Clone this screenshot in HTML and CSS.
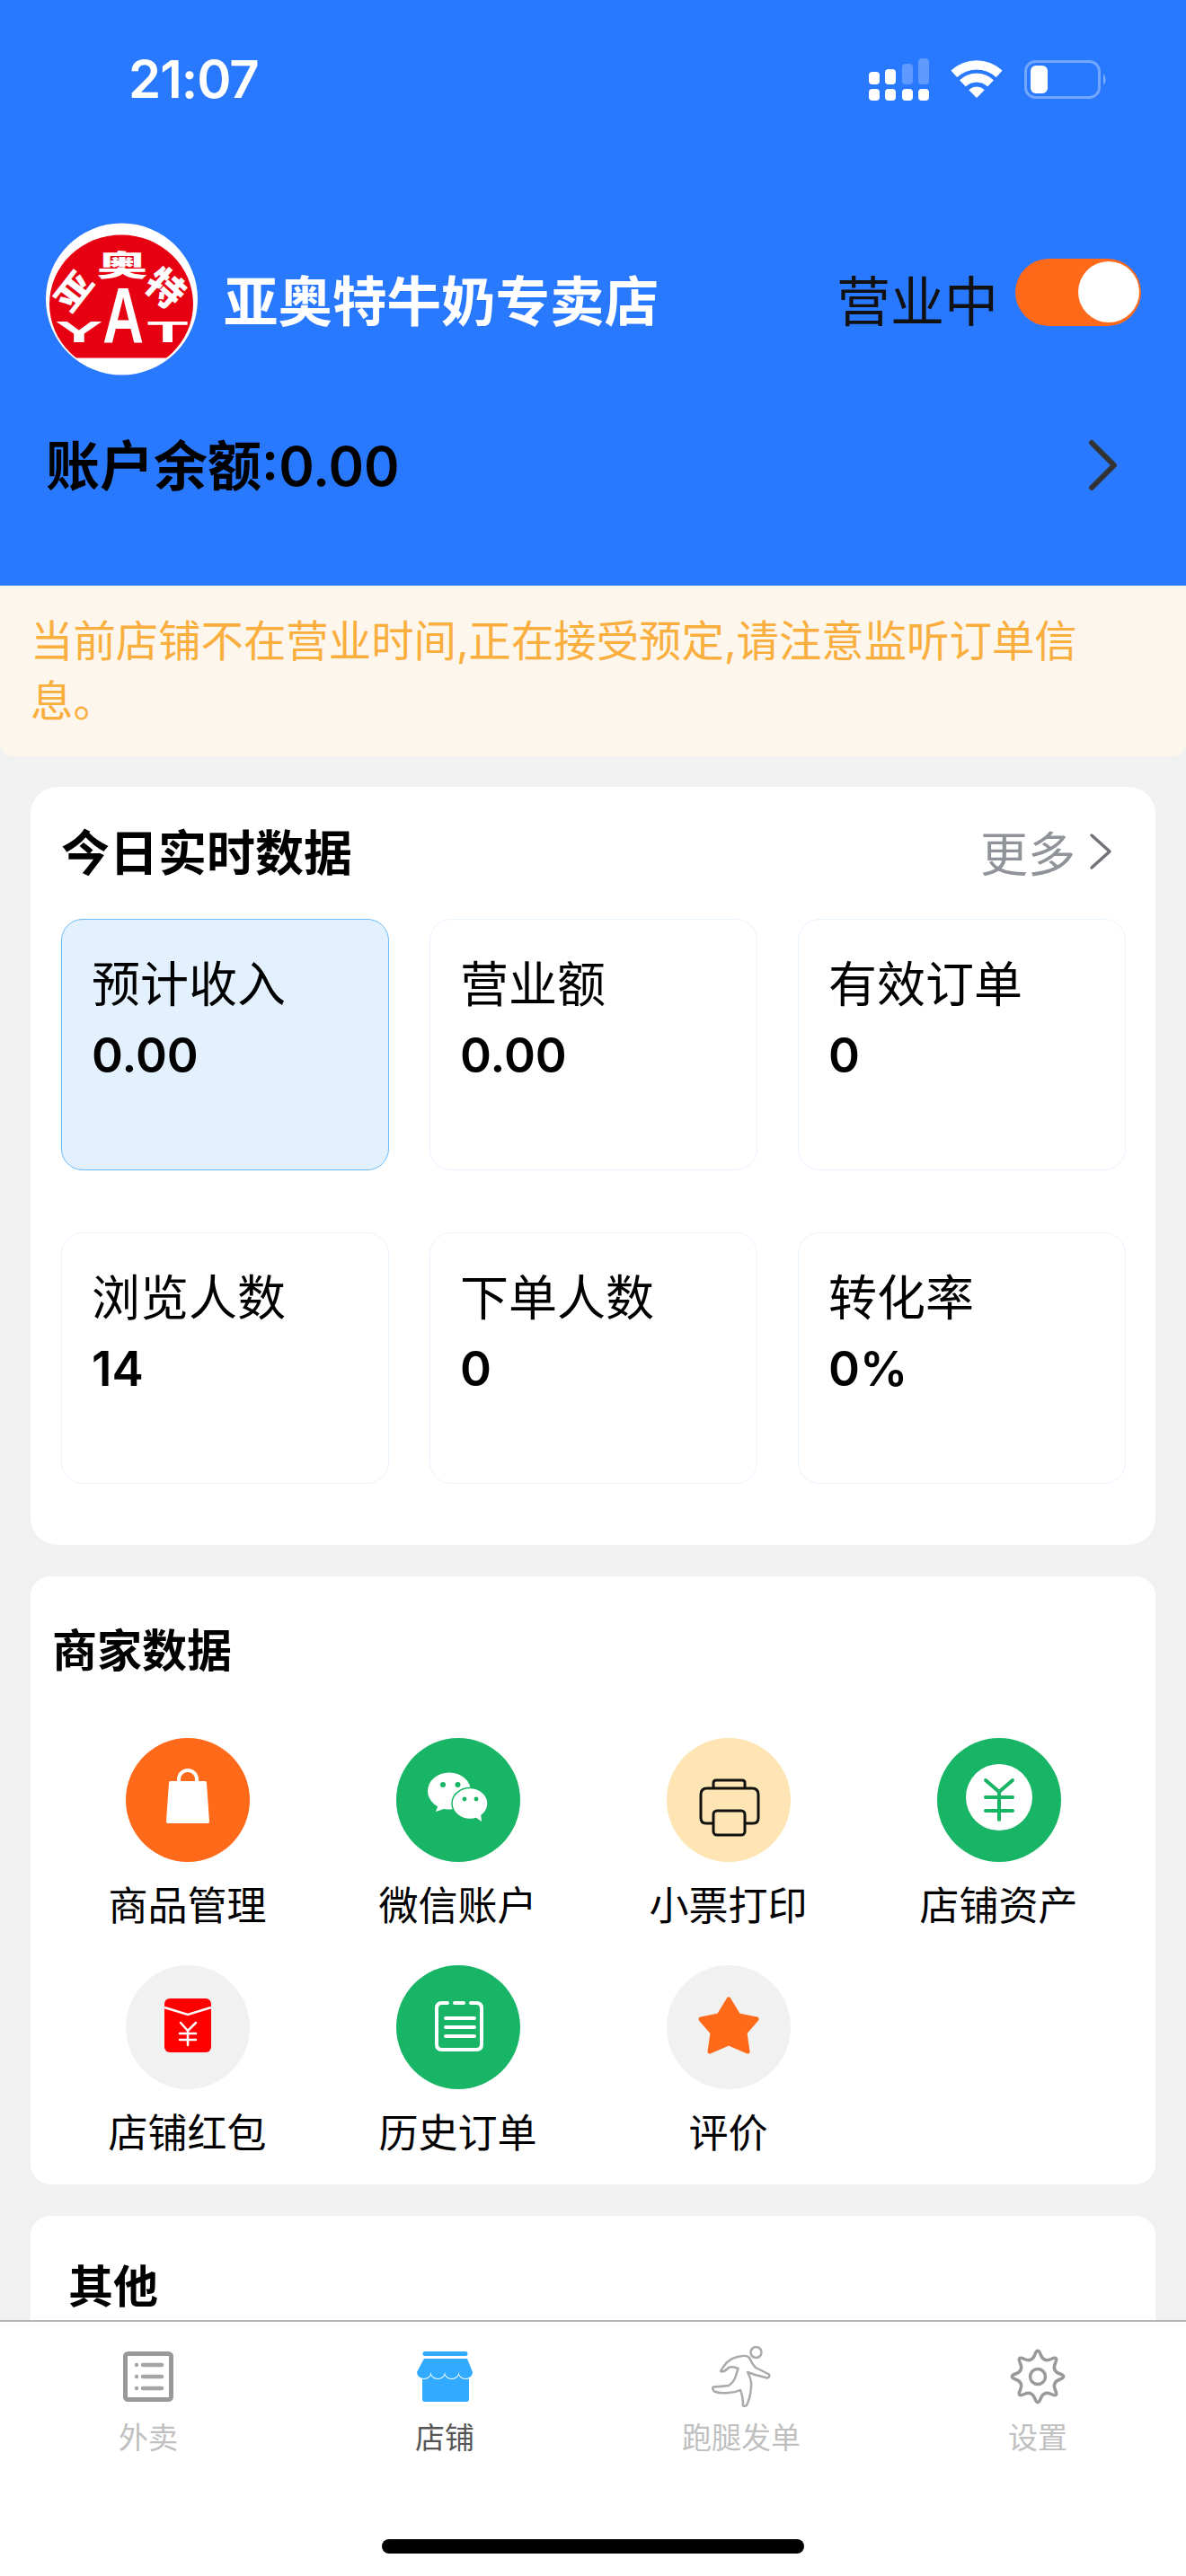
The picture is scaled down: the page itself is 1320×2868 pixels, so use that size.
FILE: index.html
```html
<!DOCTYPE html>
<html lang="zh-CN">
<head>
    <meta charset="UTF-8">
    <meta name="viewport" content="width=device-width, initial-scale=1.0">
    <title>店铺</title>
    <link rel="stylesheet" href="styles.css">
</head>
<body>
<div class="page">
    <header class="header">
        <div class="status-bar">
            <span class="time">21:07</span>
            <div class="status-icons">
                <svg class="signal" width="67" height="47" viewBox="0 0 67 47">
                    <g fill="#fff">
                        <rect x="0" y="34" width="12" height="13" rx="4"/>
                        <rect x="18" y="34" width="12" height="13" rx="4"/>
                        <rect x="37" y="34" width="12" height="13" rx="4"/>
                        <rect x="55" y="34" width="12" height="13" rx="4"/>
                        <rect x="0" y="15" width="12" height="14" rx="4"/>
                        <rect x="18" y="12" width="12" height="17" rx="4"/>
                    </g>
                    <g fill="#fff" opacity="0.25">
                        <rect x="37" y="6" width="12" height="23" rx="4"/>
                        <rect x="55" y="0" width="12" height="29" rx="4"/>
                    </g>
                </svg>
                <svg class="wifi" width="58" height="42" viewBox="0 0 58 42">
                    <g fill="#fff" stroke="#fff" stroke-width="1" stroke-linejoin="round">
                        <path d="M1 11.5A42 42 0 0 1 57 11.5L50.8 18.6A32 32 0 0 0 7.2 18.6Z"/>
                        <path d="M10.6 22.3A27 27 0 0 1 47.4 22.3L41.3 28.8A18 18 0 0 0 16.7 28.8Z"/>
                        <path d="M20.8 33.2A12 12 0 0 1 37.2 33.2L29 41.5Z"/>
                    </g>
                </svg>
                <svg class="battery" width="93" height="43" viewBox="0 0 93 43">
                    <rect x="1.5" y="1.5" width="82" height="40" rx="11" fill="none" stroke="#fff" stroke-opacity="0.35" stroke-width="3"/>
                    <rect x="7" y="6" width="19" height="31" rx="6" fill="#fff"/>
                    <path d="M88 15Q93 21.5 88 28Z" fill="#fff" fill-opacity="0.4"/>
                </svg>
            </div>
        </div>

        <div class="shop-row">
            <svg class="shop-logo" width="169" height="170" viewBox="0 0 169 169">
                <defs>
                    <clipPath id="logoClip"><rect x="0" y="0" width="169" height="150"/></clipPath>
                </defs>
                <circle cx="84.5" cy="84.5" r="84.5" fill="#fff"/>
                <ellipse cx="84" cy="90" rx="80" ry="77" fill="#e60012" clip-path="url(#logoClip)"/>
                <g class="logo-cn" fill="#fff" text-anchor="middle" dominant-baseline="central">
                    <text transform="translate(29 74) rotate(-52) scale(1.05 0.85)" font-size="42">亚</text>
                    <text transform="translate(85 45) scale(1.35 0.75)" font-size="42">奥</text>
                    <text transform="translate(135 70) rotate(42)" font-size="42">特</text>
                </g>
                <g class="logo-en" fill="#fff" text-anchor="middle">
                    <text transform="translate(37 132) scale(2.35 1)" font-size="34">Y</text>
                    <text transform="translate(86 132) scale(0.72 1)" font-size="88">A</text>
                    <text transform="translate(135.500 132) scale(2.2 1)" font-size="34">T</text>
                </g>
            </svg>
            <span class="shop-name">亚奥特牛奶专卖店</span>
            <span class="shop-state">营业中</span>
            <div class="switch"><div class="switch-knob"></div></div>
        </div>

        <div class="balance-row">
            <span class="balance">账户余额:0.00</span>
            <svg width="40" height="60" viewBox="0 0 40 60">
                <polyline points="7,5 32,30 7,55" fill="none" stroke="#333" stroke-width="6" stroke-linecap="round" stroke-linejoin="round"/>
            </svg>
        </div>
    </header>

    <div class="notice">当前店铺不在营业时间,正在接受预定,请注意监听订单信息。</div>

    <section class="card today">
        <div class="today-head">
            <h2 class="today-title">今日实时数据</h2>
            <div class="more">
                <span>更多</span>
                <svg width="26" height="44" viewBox="0 0 26 44">
                    <polyline points="3,4 23,22 3,40" fill="none" stroke="#707378" stroke-width="3.5" stroke-linecap="round" stroke-linejoin="round"/>
                </svg>
            </div>
        </div>
        <div class="stat-grid">
            <div class="stat stat-active">
                <div class="stat-label">预计收入</div>
                <div class="stat-value">0.00</div>
            </div>
            <div class="stat">
                <div class="stat-label">营业额</div>
                <div class="stat-value">0.00</div>
            </div>
            <div class="stat">
                <div class="stat-label">有效订单</div>
                <div class="stat-value">0</div>
            </div>
            <div class="stat">
                <div class="stat-label">浏览人数</div>
                <div class="stat-value">14</div>
            </div>
            <div class="stat">
                <div class="stat-label">下单人数</div>
                <div class="stat-value">0</div>
            </div>
            <div class="stat">
                <div class="stat-label">转化率</div>
                <div class="stat-value">0%</div>
            </div>
        </div>
    </section>

    <section class="card merchant">
        <h2 class="section-title">商家数据</h2>
        <div class="menu-grid">
            <div class="menu-item">
                <div class="menu-icon bg-orange">
                    <svg viewBox="0 0 138 138">
                        <path d="M59 52V46a10 10 0 0 1 20 0V52" fill="none" stroke="#fff" stroke-width="4"/>
                        <path d="M50 48H88Q90 48 90 50L93 93Q93 95 91 95H47Q45 95 45 93L48 50Q48 48 50 48Z" fill="#fff"/>
                    </svg>
                </div>
                <span class="menu-label">商品管理</span>
            </div>
            <div class="menu-item">
                <div class="menu-icon bg-green">
                    <svg viewBox="0 0 138 138">
                        <ellipse cx="59" cy="59" rx="24" ry="20.5" fill="#fff"/>
                        <path d="M47 74L44 82L56 78Z" fill="#fff"/>
                        <circle cx="52" cy="52" r="3" fill="#18b566"/>
                        <circle cx="68.500" cy="52" r="3" fill="#18b566"/>
                        <ellipse cx="82" cy="73" rx="20" ry="17.500" fill="#fff" stroke="#18b566" stroke-width="1.500"/>
                        <path d="M88 88L95 93L94 84Z" fill="#fff"/>
                        <circle cx="76" cy="68" r="2.400" fill="#18b566"/>
                        <circle cx="89" cy="68" r="2.400" fill="#18b566"/>
                    </svg>
                </div>
                <span class="menu-label">微信账户</span>
            </div>
            <div class="menu-item">
                <div class="menu-icon bg-cream">
                    <svg viewBox="0 0 138 138">
                        <g fill="none" stroke="#111" stroke-width="3" stroke-linejoin="round">
                            <path d="M52 56V50Q52 47 55 47H84Q87 47 87 50V56"/>
                            <path d="M52 95H44Q38 95 38 89V63Q38 56 45 56H95Q102 56 102 63V89Q102 95 96 95H87"/>
                            <rect x="52" y="81" width="35" height="27" rx="4"/>
                        </g>
                    </svg>
                </div>
                <span class="menu-label">小票打印</span>
            </div>
            <div class="menu-item">
                <div class="menu-icon bg-green">
                    <svg viewBox="0 0 138 138">
                        <circle cx="69" cy="66" r="37" fill="#fff"/>
                        <path d="M54 47L69 60L84 47M69 60V91M54 66H84M54 81H84" fill="none" stroke="#18b566" stroke-width="4" stroke-linecap="round" stroke-linejoin="round"/>
                    </svg>
                </div>
                <span class="menu-label">店铺资产</span>
            </div>
            <div class="menu-item">
                <div class="menu-icon bg-gray">
                    <svg viewBox="0 0 138 138">
                        <rect x="43" y="37" width="52" height="60" rx="6" fill="#f00"/>
                        <path d="M43 47L69 55L95 47" fill="none" stroke="#fff" stroke-width="2.500"/>
                        <path d="M61 64L69 73L78 64M69 73V89M60 76H78M60 83H78" fill="none" stroke="#fff" stroke-width="2.500" stroke-linecap="round"/>
                    </svg>
                </div>
                <span class="menu-label">店铺红包</span>
            </div>
            <div class="menu-item">
                <div class="menu-icon bg-green">
                    <svg viewBox="0 0 138 138">
                        <g fill="none" stroke="#fff" stroke-width="4" stroke-linecap="round">
                            <path d="M57 42H51Q45 42 45 48V88Q45 94 51 94H89Q95 94 95 88V48Q95 42 89 42H83"/>
                            <path d="M65 42H75"/>
                            <path d="M55 59H87M55 69H87M55 79H87"/>
                        </g>
                    </svg>
                </div>
                <span class="menu-label">历史订单</span>
            </div>
            <div class="menu-item">
                <div class="menu-icon bg-gray">
                    <svg viewBox="0 0 138 138">
                        <path d="M69 38L80 56L100 60L87 75L90 96L69 87L48 96L51 75L38 60L58 56Z" fill="#ff6a1a" stroke="#ff6a1a" stroke-width="5" stroke-linejoin="round"/>
                    </svg>
                </div>
                <span class="menu-label">评价</span>
            </div>
        </div>
    </section>

    <section class="card other">
        <h2 class="section-title">其他</h2>
    </section>

    <nav class="tabbar">
        <div class="tabs">
            <div class="tab">
                <svg width="68" height="68" viewBox="0 0 68 68">
                    <rect x="8.500" y="8.500" width="51" height="51" rx="3" fill="none" stroke="#999" stroke-width="5"/>
                    <path d="M28 21H49M28 34H49M28 47H49" stroke="#a5a5a5" stroke-width="4.500" stroke-linecap="round"/>
                    <circle cx="21" cy="21" r="2.200" fill="#a5a5a5"/>
                    <circle cx="21" cy="34" r="2.200" fill="#a5a5a5"/>
                    <circle cx="21" cy="47" r="2.200" fill="#a5a5a5"/>
                </svg>
                <span class="tab-label">外卖</span>
            </div>
            <div class="tab tab-active">
                <svg width="68" height="68" viewBox="0 0 68 68">
                    <rect x="9.500" y="6" width="50" height="5" rx="2.500" fill="#31aaff"/>
                    <path d="M9 30H61V59Q61 62 58 62H12Q9 62 9 59Z" fill="#31aaff"/>
                    <path d="M11 14H59L65 29A7.750 7 0 0 1 49.500 29A7.750 7 0 0 1 34 29A7.750 7 0 0 1 18.500 29A7.750 7 0 0 1 3 29Z" fill="#31aaff" stroke="#fff" stroke-width="2" paint-order="stroke"/>
                </svg>
                <span class="tab-label">店铺</span>
            </div>
            <div class="tab">
                <svg width="68" height="68" viewBox="0 0 68 68">
                    <circle cx="50.500" cy="7" r="6" fill="none" stroke="#aaa" stroke-width="2.500"/>
                    <path d="M11 28Q18 15 28 12.500Q40 9 43 13Q46 20 50 24L65 31.500Q66 35 63 35.500L49.500 32L41 29Q46 38 45 46Q44 58 40 66Q37 68 36 66Q36 56 33 49Q27 52 20 52Q10 53 4 50.500Q1 47 3 45.500Q12 45 20 44Q26 40 28 33L30.500 25Q24 22 20 24Q14 30 11 28Z" fill="none" stroke="#aaa" stroke-width="2.500" stroke-linejoin="round"/>
                </svg>
                <span class="tab-label">跑腿发单</span>
            </div>
            <div class="tab">
                <svg width="68" height="68" viewBox="0 0 68 68">
                    <g transform="translate(34 34)" fill="none" stroke="#999" stroke-width="3.500">
                        <path d="M-3.250 -24.350Q0 -33 3.250 -24.350T14.920 -19.520T19.520 -14.920T24.350 -3.250T24.350 3.250T19.520 14.920T14.920 19.520T3.250 24.350T-3.250 24.350T-14.920 19.520T-19.520 14.920T-24.350 3.250T-24.350 -3.250T-19.520 -14.920T-14.920 -19.520T-3.250 -24.350Z"/>
                        <circle r="8.500"/>
                    </g>
                </svg>
                <span class="tab-label">设置</span>
            </div>
        </div>
        <div class="home-bar"></div>
    </nav>
</div>
</body>
</html>
```

FILE: styles.css
```css
* {
    box-sizing: border-box;
}

body {
    margin: 0;
    background-color: #f1f1f1;
    color: #000;
    font-family: Inter, "Noto Sans CJK SC", sans-serif;
}

h2 {
    margin: 0;
}

.page {
    position: relative;
    height: 2868px;
    overflow: hidden;
}

/* top blue area */
.header {
    height: 652px;
    background-color: #2979ff;
}

.status-bar {
    display: flex;
    justify-content: space-between;
    align-items: center;
    height: 176px;
    padding: 0 87px 0 143px;
}

.time {
    color: #fff;
    font-size: 58px;
    font-weight: 600;
    letter-spacing: -1px;
}

.status-icons {
    display: flex;
    align-items: center;
    gap: 24px;
}

.shop-row {
    display: flex;
    align-items: center;
    height: 170px;
    margin-top: 72px;
    padding: 0 50px 0 51px;
}

.shop-logo {
    overflow: visible;
}

.logo-cn text {
    font-family: "Noto Sans CJK SC", sans-serif;
    font-weight: 900;
}

.logo-en text {
    font-family: "Liberation Sans", sans-serif;
    font-weight: 700;
}

.shop-name {
    margin-left: 29px;
    margin-bottom: 3px;
    color: #fff;
    font-size: 60.5px;
    font-weight: 600;
}

.shop-state {
    margin-left: auto;
    margin-bottom: 3px;
    color: #111;
    font-size: 60px;
}

.switch {
    display: flex;
    justify-content: flex-end;
    align-items: center;
    width: 140px;
    height: 75px;
    margin-left: 19px;
    margin-bottom: 16px;
    padding: 0 2px;
    border-radius: 38px;
    background-color: #ff6a1a;
}

.switch-knob {
    width: 68px;
    height: 68px;
    border-radius: 50%;
    background-color: #fff;
}

.balance-row {
    display: flex;
    justify-content: space-between;
    align-items: center;
    height: 80px;
    margin-top: 60px;
    padding: 0 72px 0 51px;
}

.balance {
    margin-bottom: 8px;
    font-size: 60px;
    font-weight: 600;
}

.notice {
    height: 190px;
    padding: 28px 100px 0 34px;
    border-radius: 0 0 14px 14px;
    background-color: #fdf6ec;
    color: #f9ae3d;
    font-size: 47.4px;
    line-height: 67px;
}

.card {
    margin: 35px 34px 0;
    background-color: #fff;
}

/* today's figures */
.today {
    margin-top: 34px;
    padding: 0 34px 68px;
    border-radius: 30px;
}

.today-head {
    display: flex;
    justify-content: space-between;
    align-items: center;
    height: 147px;
}

.today-title {
    margin-bottom: 6px;
    font-size: 54px;
    font-weight: 600;
}

.more {
    display: flex;
    align-items: center;
    gap: 15px;
    padding-right: 14px;
    padding-bottom: 4px;
    color: #909399;
    font-size: 53px;
}

.stat-grid {
    display: grid;
    grid-template-columns: repeat(3, 365px);
    gap: 69px 45px;
}

.stat {
    height: 280px;
    padding: 40px 33px 0;
    border: 1px solid #e8f3fe;
    border-radius: 24px;
}

.stat-active {
    border-color: #6cbcfb;
    background-color: #e3f1fe;
}

.stat-label {
    font-size: 54px;
    line-height: 66px;
}

.stat-value {
    font-size: 53px;
    font-weight: 600;
    line-height: 90px;
}

/* merchant menu */
.merchant {
    height: 677px;
    padding: 0 24px;
    border-radius: 22px;
}

.section-title {
    display: flex;
    align-items: center;
    height: 164px;
    font-size: 50px;
    font-weight: 600;
}

.merchant .section-title {
    height: 158px;
    margin-bottom: 22px;
}

.menu-grid {
    display: grid;
    grid-template-columns: repeat(4, 301px);
    row-gap: 36px;
}

.menu-item {
    display: flex;
    flex-direction: column;
    align-items: center;
}

.menu-icon {
    width: 138px;
    height: 138px;
    border-radius: 50%;
}

.menu-icon svg {
    display: block;
    width: 138px;
    height: 138px;
}

.bg-orange {
    background-color: #ff6a1a;
}

.bg-green {
    background-color: #18b566;
}

.bg-cream {
    background-color: #fee5b3;
}

.bg-gray {
    background-color: #f1f1f1;
}

.menu-label {
    margin-top: 19px;
    font-size: 44px;
    line-height: 60px;
}

.other {
    height: 400px;
    padding: 0 42px;
    border-radius: 22px;
}

.other .section-title {
    height: 150px;
}

/* bottom tabs sit over the page */
.tabbar {
    position: absolute;
    left: 0;
    right: 0;
    bottom: 0;
    height: 285px;
    padding-top: 27px;
    border-top: 2px solid #b5b5b5;
    background-color: #fff;
}

.tabs {
    display: grid;
    grid-template-columns: repeat(4, 1fr);
}

.tab {
    display: flex;
    flex-direction: column;
    align-items: center;
    gap: 14px;
}

.tab-label {
    color: #c0c0c0;
    font-size: 33px;
    line-height: 40px;
}

.tab-active .tab-label {
    color: #555;
}

.home-bar {
    width: 470px;
    height: 16px;
    margin: 93px auto 0;
    border-radius: 8px;
    background-color: #000;
}
```
